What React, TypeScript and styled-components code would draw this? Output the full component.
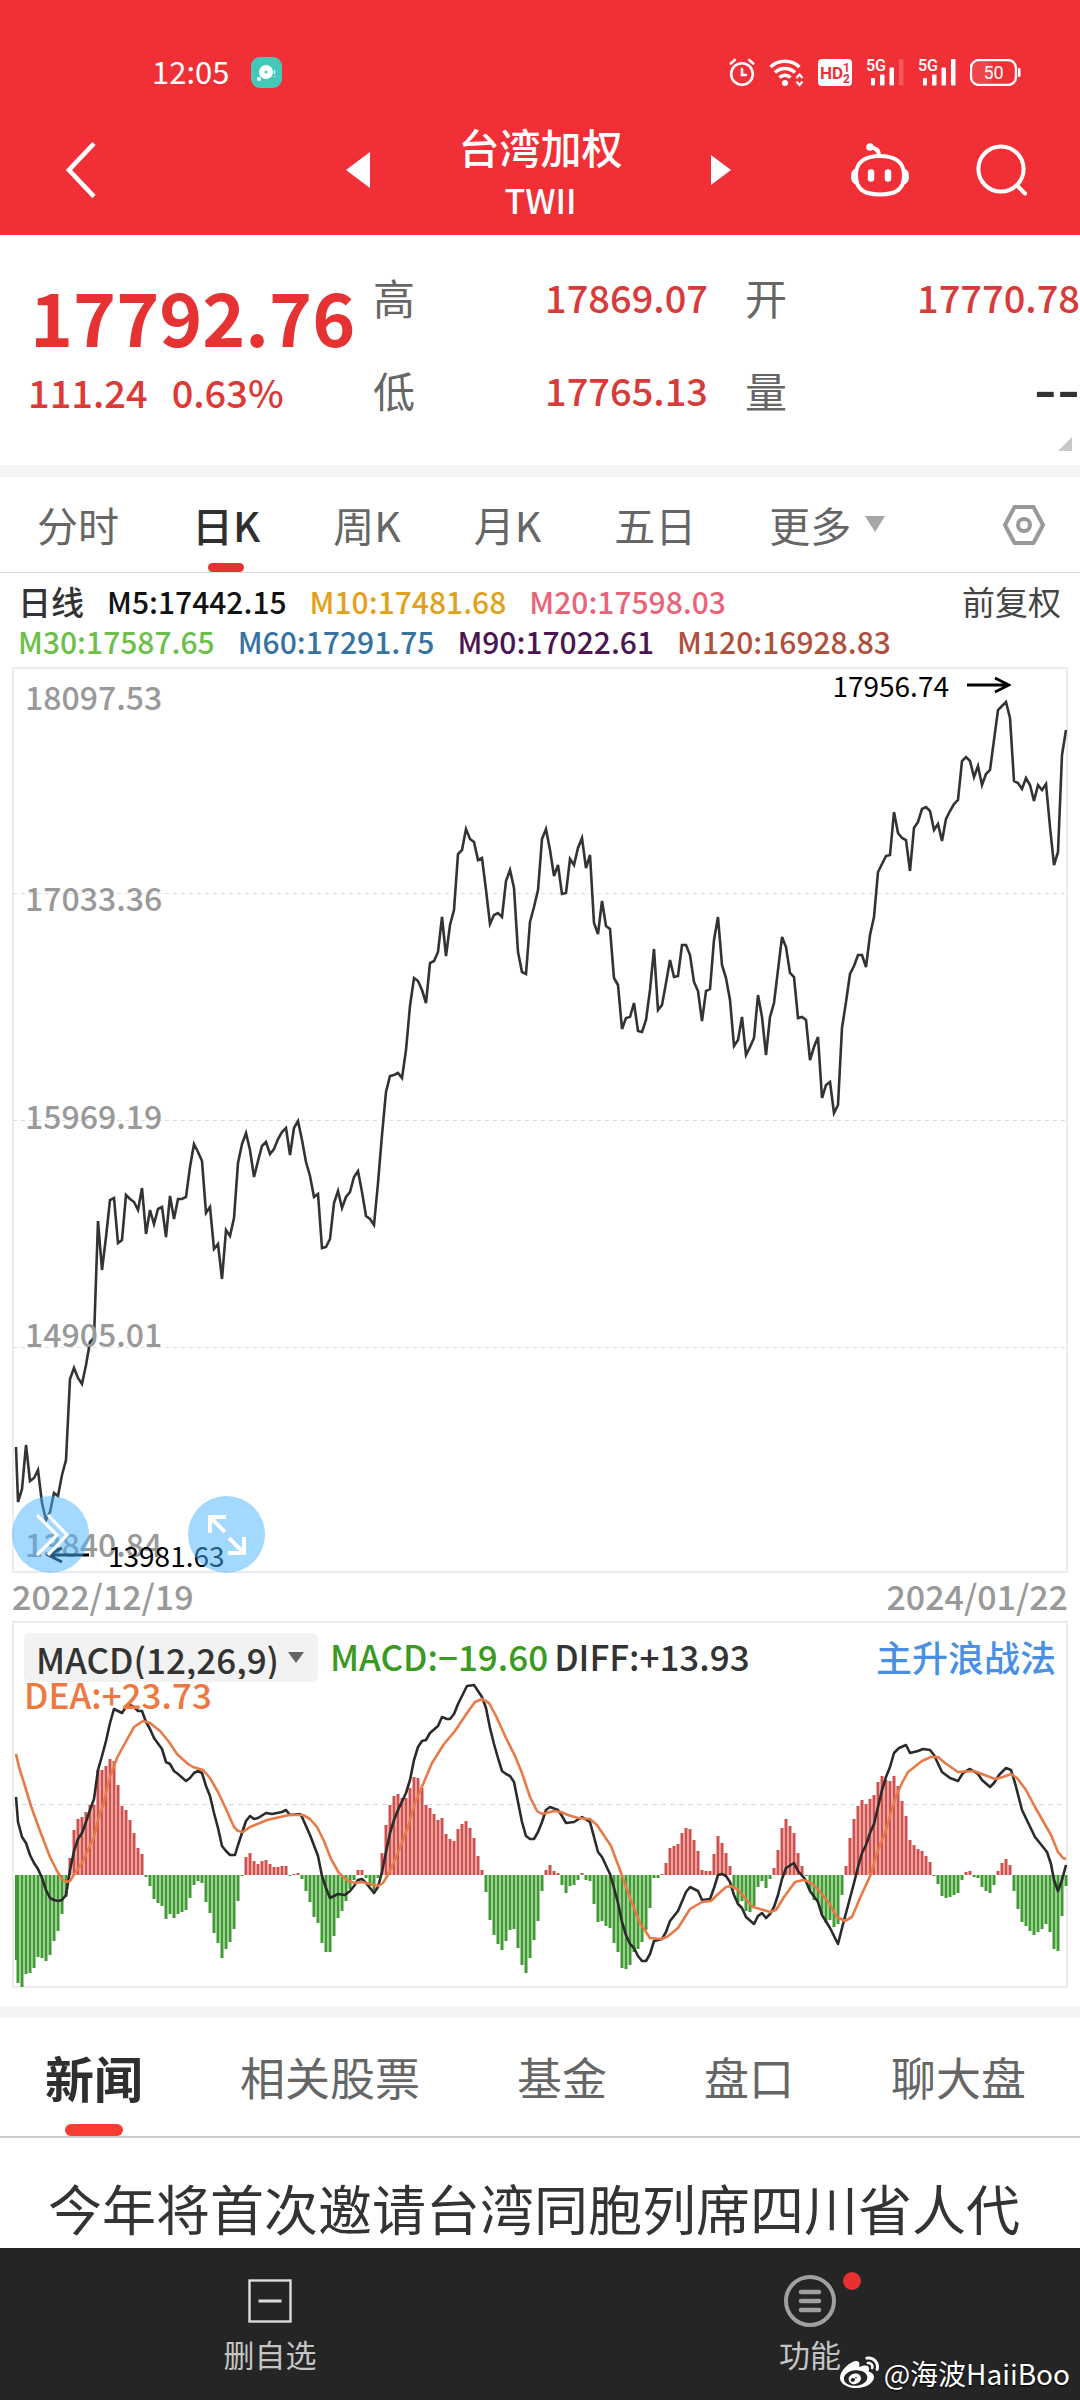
import React from "react";
import styled, { createGlobalStyle, css } from "styled-components";
import { FaWeibo } from "react-icons/fa";

/* ---------- chart data ---------- */

const STEP = 4;
const FIRST_X = 18;

// Closing line, one plotted value per trading day.
const CLOSES = [
  1502, 1489, 1445, 1481, 1478, 1470, 1503, 1520, 1512, 1493, 1496, 1475, 1460, 1379, 1368, 1378, 1384, 1365, 1342, 1338,
  1221, 1270, 1237, 1200, 1198, 1243, 1240, 1195, 1199, 1202, 1210, 1188, 1234, 1210, 1224, 1209, 1207, 1237, 1196, 1219,
  1199, 1199, 1197, 1167, 1144, 1152, 1161, 1213, 1207, 1249, 1244, 1279, 1230, 1236, 1218, 1163, 1144, 1133, 1150, 1177,
  1161, 1146, 1142, 1154, 1149, 1139, 1132, 1128, 1155, 1128, 1121, 1140, 1162, 1176, 1197, 1194, 1248, 1247, 1239, 1203,
  1191, 1208, 1197, 1192, 1177, 1171, 1192, 1216, 1219, 1225, 1183, 1135, 1092, 1076, 1075, 1073, 1078, 1050, 1006, 978,
  981, 990, 1003, 963, 961, 952, 917, 956, 925, 910, 854, 850, 829, 839, 842, 860, 858, 890, 924, 915,
  913, 917, 881, 870, 888, 952, 972, 974, 922, 907, 890, 839, 829, 850, 876, 865, 894, 893, 859, 865,
  848, 838, 868, 855, 923, 934, 901, 926, 929, 978, 985, 1029, 1018, 1017, 1003, 1031, 1032, 1020, 990, 949,
  1010, 1005, 983, 960, 977, 976, 945, 945, 955, 982, 991, 1021, 991, 989, 940, 917, 965, 978, 1000, 1046,
  1040, 1017, 1055, 1047, 1038, 995, 1017, 1055, 1017, 1003, 970, 937, 947, 973, 977, 1018, 1017, 1020, 1060, 1047,
  1037, 1098, 1085, 1082, 1113, 1105, 1028, 1002, 974, 966, 955, 955, 967, 935, 917, 872, 864, 856, 855, 812,
  833, 838, 840, 871, 828, 822, 809, 807, 811, 830, 824, 841, 819, 811, 804, 800, 761, 757, 761, 777,
  766, 785, 774, 770, 740, 710, 706, 702, 718, 781, 783, 789, 778, 785, 801, 785, 790, 784, 827, 865,
  852, 755, 730,
];

// MACD histogram: positive values rise above the zero axis, negative ones hang below it.
const HISTOGRAM = [
  -108, -112, -99, -98, -93, -82, -83, -86, -80, -66, -56, -39, -22, 17, 45, 56, 58, 63, 70, 70,
  105, 105, 109, 116, 114, 90, 69, 65, 55, 42, 27, 21, -2, -11, -24, -28, -31, -44, -39, -43,
  -39, -37, -35, -23, -10, -6, -8, -27, -38, -58, -68, -83, -74, -67, -54, -26, -1, 18, 22, 14,
  11, 14, 15, 11, 8, 8, 9, 9, -1, 1, 2, -4, -16, -27, -42, -48, -68, -77, -77, -61,
  -43, -36, -26, -14, -5, 5, 5, -3, -11, -15, -3, 22, 50, 70, 79, 81, 77, 77, 87, 98,
  97, 87, 70, 67, 61, 55, 57, 41, 36, 34, 46, 51, 54, 47, 37, 19, 5, -17, -45, -60,
  -69, -75, -66, -55, -54, -73, -90, -98, -83, -65, -46, -16, 5, 10, 4, 2, -10, -18, -11, -10,
  -5, 2, -5, -6, -29, -47, -46, -51, -53, -68, -77, -93, -94, -90, -77, -74, -67, -55, -33, -3,
  -3, 1, 12, 27, 29, 31, 42, 47, 46, 35, 24, 5, 4, 4, 21, 39, 32, 22, 9, -13,
  -27, -26, -36, -37, -31, -12, -6, -13, -4, 7, 25, 47, 56, 49, 42, 22, 9, -1, -15, -25,
  -27, -39, -48, -45, -52, -49, -20, 9, 37, 56, 69, 75, 71, 76, 80, 93, 99, 95, 94, 99,
  89, 74, 59, 35, 30, 26, 24, 19, 13, -1, -9, -21, -23, -22, -20, -18, -5, 3, 4, -2,
  -3, -12, -16, -18, -10, 4, 12, 16, 10, -16, -34, -47, -51, -56, -60, -57, -54, -49, -57, -74,
  -76, -41, -11,
];

const DIFF =
  "16,1797 18,1822 22,1837 26,1843 30,1855 34,1863 38,1869 42,1878 46,1890 50,1898 54,1900 58,1901 62,1900 66,1895 70,1870 74,1851 78,1839 82,1833 86,1822 90,1810 94,1799 98,1770 102,1756 106,1741 110,1723 114,1709 118,1711 122,1713 126,1707 130,1705 134,1707 138,1711 142,1711 146,1722 150,1729 154,1738 162,1749 166,1762 170,1764 174,1771 178,1774 186,1781 190,1778 194,1773 198,1771 202,1773 206,1786 210,1796 214,1813 218,1828 222,1846 226,1851 230,1855 235,1855 238,1845 242,1833 246,1821 250,1816 254,1819 258,1818 266,1813 272,1814 282,1812 286,1810 290,1815 300,1814 302,1817 310,1835 318,1856 322,1876 326,1888 330,1898 338,1894 345,1895 350,1891 354,1886 358,1880 362,1879 366,1883 370,1888 374,1893 378,1887 382,1872 386,1852 390,1833 394,1820 398,1810 406,1793 410,1780 414,1760 418,1747 422,1741 426,1740 430,1733 438,1726 442,1717 447,1719 450,1719 454,1714 458,1704 467,1686 474,1685 482,1697 486,1708 490,1728 494,1744 498,1758 502,1771 506,1774 510,1776 514,1782 518,1802 522,1822 526,1836 530,1839 534,1839 538,1832 542,1822 546,1810 550,1807 558,1810 562,1816 566,1823 574,1822 582,1817 590,1822 594,1837 598,1852 602,1857 610,1874 614,1888 618,1903 622,1922 626,1935 630,1944 634,1948 638,1956 642,1961 646,1961 650,1954 654,1941 662,1939 666,1932 670,1921 678,1911 686,1892 690,1887 698,1891 702,1900 710,1899 714,1888 718,1875 722,1874 726,1876 730,1882 734,1895 738,1904 742,1908 746,1917 754,1924 758,1916 762,1913 766,1918 770,1914 774,1907 778,1895 782,1879 786,1868 794,1863 798,1871 805,1879 810,1891 818,1902 822,1915 830,1928 838,1944 842,1928 846,1913 854,1883 858,1867 862,1853 866,1845 870,1833 874,1824 878,1807 882,1790 886,1777 890,1767 894,1753 899,1748 906,1745 910,1753 918,1751 923,1749 930,1750 934,1755 942,1772 950,1778 958,1781 963,1773 970,1769 978,1774 982,1780 990,1787 994,1783 999,1775 1006,1768 1011,1770 1015,1783 1022,1810 1035,1837 1047,1852 1051,1864 1054,1880 1058,1891 1062,1880 1066,1865";

const DEA =
  "16,1754 19,1767 24,1783 31,1806 40,1831 50,1857 57,1871 62,1879 66,1882 70,1881 75,1873 82,1863 88,1850 94,1837 98,1820 103,1805 110,1777 117,1758 124,1745 134,1727 143,1721 150,1723 160,1731 169,1742 177,1754 188,1764 193,1767 203,1770 210,1778 218,1792 226,1809 234,1827 238,1831 243,1832 250,1827 260,1823 267,1820 289,1815 303,1815 310,1819 317,1827 324,1841 331,1859 339,1873 348,1881 355,1883 362,1882 370,1884 378,1886 383,1883 389,1873 394,1862 401,1845 408,1827 415,1803 424,1782 432,1763 444,1744 455,1731 467,1713 475,1702 482,1699 489,1703 496,1716 506,1738 515,1756 522,1773 530,1797 537,1811 542,1814 554,1811 561,1812 568,1815 578,1818 590,1819 597,1825 611,1846 620,1870 630,1898 640,1923 650,1938 661,1939 667,1937 678,1928 690,1909 702,1902 711,1901 717,1895 726,1887 731,1886 738,1890 753,1907 770,1912 776,1910 784,1897 795,1882 803,1880 810,1882 817,1888 829,1903 837,1917 845,1921 852,1917 860,1898 871,1874 877,1853 886,1830 895,1799 902,1783 908,1772 922,1761 931,1757 938,1757 945,1763 958,1772 974,1771 995,1779 1003,1777 1011,1774 1017,1778 1026,1790 1035,1807 1051,1835 1058,1852 1063,1858 1066,1859";

const priceLine = ["16,1447", ...CLOSES.map((y, i) => `${FIRST_X + i * STEP},${y}`)].join(" ");

/* ---------- global ---------- */

const FONT = `"Noto Sans CJK SC", "Noto Sans", sans-serif`;

const GlobalStyle = createGlobalStyle`
  *, *::before, *::after { box-sizing: border-box; }
  body { margin: 0; background: #fff; font-family: ${FONT}; }
  h1, h2, p, ul, dl, dd, dt { margin: 0; padding: 0; font-weight: 400; }
  ul { list-style: none; }
  button, select { font-family: inherit; border: 0; background: none; padding: 0; margin: 0; color: inherit; cursor: pointer; }
  a { text-decoration: none; color: inherit; }
  svg { display: block; flex: none; }
`;

const Page = styled.div`
  min-height: 100vh;
  display: flex;
  flex-direction: column;
  color: #333;
`;

const Band = styled.div`
  height: 12px;
  background: #f4f4f4;
`;

/* ---------- header ---------- */

const Header = styled.header`
  background: #f12f37;
  color: #fff;
`;

const StatusBar = styled.div`
  display: flex;
  align-items: center;
  justify-content: space-between;
  padding: 48px 59px 0 152px;
  height: 96px;
`;

const StatusGroup = styled.div<{ $gap: number }>`
  display: flex;
  align-items: center;
  gap: ${(p) => p.$gap}px;
`;

const Clock = styled.span`
  font-size: 31px;
  line-height: 40px;
  padding-bottom: 2px;
`;

const TitleBar = styled.div`
  display: grid;
  grid-template-columns: 280fr 385fr 297fr;
  align-items: center;
  height: 139px;
  padding: 8px 52px 0 66px;
`;

const Switcher = styled.div`
  display: flex;
  align-items: center;
  justify-content: space-between;
`;

const TitleBlock = styled.div`
  text-align: center;
  padding-top: 6px;
`;

const StockName = styled.h1`
  && { font-weight: 500; }
  font-size: 41px;
  line-height: 54px;
`;

const StockCode = styled.p`
  && { font-weight: 500; }
  font-size: 34px;
  line-height: 54px;
`;

const Tools = styled.div`
  display: flex;
  justify-content: flex-end;
  align-items: center;
  gap: 66px;
`;

/* ---------- quote ---------- */

const Quote = styled.section`
  position: relative;
  display: grid;
  grid-template-columns: 373fr 335fr 372fr;
  height: 230px;
`;

const Last = styled.div`
  padding: 40px 0 0 28px;
  color: #e63232;
`;

const LastPrice = styled.p`
  && { font-weight: 700; }
  padding-left: 2px;
  font-size: 73px;
  line-height: 80px;
`;

const Change = styled.p`
  && { font-weight: 500; }
  display: flex;
  gap: 24px;
  font-size: 38px;
  line-height: 74px;
  color: #dc3a37;
`;

const Facts = styled.dl<{ $indent?: boolean }>`
  padding: 34px 0 0 ${(p) => (p.$indent ? 37 : 0)}px;
`;

const Fact = styled.div`
  display: flex;
  justify-content: space-between;
  align-items: center;
  height: 56px;
  margin-bottom: 37px;
`;

const FactName = styled.dt`
  font-size: 42px;
  line-height: 56px;
  color: #666;
`;

const FactValue = styled.dd`
  && { font-weight: 500; }
  font-size: 38px;
  line-height: 56px;
  color: #d63c3a;
`;

const FactEmpty = styled.dd`
  && { font-weight: 400; }
  font-family: "DejaVu Sans", sans-serif;
  font-size: 64px;
  line-height: 56px;
  color: #333;
`;

const Corner = styled.span`
  position: absolute;
  right: 8px;
  bottom: 14px;
  border-style: solid;
  border-width: 0 0 14px 14px;
  border-color: transparent transparent #c8c8c8 transparent;
`;

/* ---------- period tabs ---------- */

const PeriodTabs = styled.nav`
  display: flex;
  align-items: stretch;
  gap: 73px;
  height: 96px;
  padding: 0 35px 0 37px;
  border-bottom: 1px solid #dedede;
`;

const TabButton = styled.button<{ $active?: boolean }>`
  position: relative;
  display: flex;
  align-items: center;
  gap: 14px;
  padding-bottom: 2px;
  font-size: 41px;
  line-height: 56px;
  font-weight: ${(p) => (p.$active ? 500 : 400)};
  color: ${(p) => (p.$active ? "#2f2f2f" : "#666")};
  white-space: nowrap;
  ${(p) =>
    p.$active &&
    css`
      &::after {
        content: "";
        position: absolute;
        left: 50%;
        bottom: 0;
        width: 36px;
        height: 9px;
        margin-left: -18px;
        border-radius: 5px;
        background: #e63232;
      }
    `}
`;

const SettingsButton = styled.button`
  margin-left: auto;
`;

/* ---------- averages ---------- */

const Averages = styled.section`
  display: flex;
  justify-content: space-between;
  padding: 8px 19px 6px 18px;
  font-size: 30px;
  line-height: 40px;
`;

const AverageRow = styled.p`
  && { font-weight: 500; }
  display: flex;
  gap: 23px;
`;

const Tint = styled.span<{ $color: string }>`
  color: ${(p) => p.$color};
`;

const Period = styled.span`
  font-size: 33px;
`;

const Adjust = styled.button`
  align-self: flex-start;
  font-size: 33px;
  line-height: 40px;
  color: #444;
`;

/* ---------- charts ---------- */

const ChartBox = styled.section`
  position: relative;
  margin: 0 12px;
`;

const ChartSvg = styled.svg`
  width: 100%;
  height: auto;
`;

const AxisLabel = styled.span<{ $top: number }>`
  position: absolute;
  left: 13px;
  top: ${(p) => p.$top}%;
  transform: translateY(-50%);
  font-size: 32px;
  line-height: 36px;
  font-weight: 500;
  color: #999;
`;

const Extreme = styled.span<{ $high?: boolean }>`
  position: absolute;
  display: flex;
  align-items: center;
  gap: 18px;
  font-size: 28px;
  line-height: 32px;
  color: #000;
  ${(p) => (p.$high ? "right: 57px; top: 2px;" : "left: 34px; bottom: 2px;")}
`;

const RoundButton = styled.button<{ $left: number }>`
  position: absolute;
  left: ${(p) => p.$left}px;
  bottom: 0;
  width: 77px;
  height: 77px;
  border-radius: 50%;
  background: rgba(72, 178, 255, 0.5);
  display: grid;
  place-items: center;
`;

const Dates = styled.div`
  display: flex;
  justify-content: space-between;
  padding: 0 12px 2px;
  font-size: 34px;
  font-weight: 500;
  line-height: 46px;
  color: #999;
`;

const MacdLegend = styled.div`
  position: absolute;
  inset: 12px 12px auto 12px;
  font-size: 35px;
  font-weight: 500;
  line-height: 46px;
`;

const MacdRow = styled.div`
  display: flex;
  align-items: flex-start;
  gap: 6px;
`;

const Picker = styled.label`
  position: relative;
  margin-right: 6px;

  svg {
    position: absolute;
    right: 14px;
    top: 19px;
    pointer-events: none;
  }
`;

const PickerSelect = styled.select`
  appearance: none;
  display: block;
  width: 294px;
  height: 49px;
  padding: 0 0 3px 12px;
  border-radius: 6px;
  background: #f2f2f2;
  font-size: 35px;
  font-weight: 500;
  color: #333;
`;

const Strategy = styled.a`
  margin-left: auto;
  font-size: 36px;
  color: #4a90e2;
`;

const Dea = styled.p`
  && { font-weight: 500; }
  line-height: 24px;
  color: #ef7740;
`;

const Spacer = styled.div`
  height: 18px;
`;

/* ---------- news ---------- */

const NewsTabs = styled.nav`
  display: flex;
  justify-content: space-between;
  height: 120px;
  padding: 0 54px 0 45px;
  border-bottom: 2px solid #cbcbcb;
`;

const NewsTab = styled.button<{ $active?: boolean }>`
  position: relative;
  font-size: ${(p) => (p.$active ? 49 : 45)}px;
  line-height: 60px;
  font-weight: ${(p) => (p.$active ? 700 : 400)};
  color: ${(p) => (p.$active ? "#2f2f2f" : "#666")};
  ${(p) =>
    p.$active &&
    css`
      &::after {
        content: "";
        position: absolute;
        left: 50%;
        bottom: 0;
        width: 58px;
        height: 12px;
        margin-left: -29px;
        border-radius: 6px;
        background: #fa3c32;
      }
    `}
`;

const NewsList = styled.ul`
  flex: 1;
  padding: 30px 48px 0;
`;

const Headline = styled.a`
  display: block;
  font-size: 54px;
  line-height: 80px;
  white-space: nowrap;
  color: #333;
`;

/* ---------- bottom bar ---------- */

const BottomBar = styled.footer`
  position: relative;
  display: grid;
  grid-template-columns: 1fr 1fr;
  height: 152px;
  background: #252525;
  color: #c4c4c4;
`;

const BottomButton = styled.button`
  display: flex;
  flex-direction: column;
  align-items: center;
  padding-top: 26px;
  gap: 6px;
  font-size: 31px;
  line-height: 40px;
`;

const IconHolder = styled.span`
  position: relative;
  display: grid;
  place-items: center;
  width: 54px;
  height: 54px;
`;

const Dot = styled.i`
  position: absolute;
  right: -24px;
  top: -2px;
  width: 18px;
  height: 18px;
  border-radius: 50%;
  background: #e83030;
`;

const Watermark = styled.p`
  position: absolute;
  right: 10px;
  bottom: 7px;
  display: flex;
  align-items: center;
  gap: 5px;
  font-size: 28px;
  line-height: 40px;
  color: #fff;
  text-shadow: 0 1px 2px #000;
`;

/* ---------- icons ---------- */

const AppBadge = () => (
  <svg width="31" height="31" viewBox="0 0 31 31">
    <rect width="31" height="31" rx="9" fill="#45c8b8" />
    <circle cx="15" cy="15" r="7" fill="#fff" />
    <circle cx="15" cy="15" r="1.5" fill="#45c8b8" />
    <circle cx="8" cy="22" r="2" fill="#fff" />
    <path d="M23.5 13v4M23.5 19v1" stroke="#c8f5ee" strokeWidth="1.5" />
  </svg>
);

const AlarmIcon = () => (
  <svg width="26" height="29" viewBox="0 0 26 29" fill="none" stroke="#fff" strokeWidth="2.6" strokeLinecap="round">
    <circle cx="13" cy="16" r="10.8" />
    <path d="M13 11v6h4M1.8 5.5l4-3.5M24.2 5.5l-4-3.5" />
  </svg>
);

const WifiIcon = () => (
  <svg width="35" height="29" viewBox="0 0 35 29" fill="none" stroke="#fff" strokeWidth="3.4">
    <path d="M1.5 9a21 21 0 0 1 29 0M6 14.500a14.500 14.500 0 0 1 20 0M10.500 19.500a8 8 0 0 1 11 0" />
    <circle cx="16" cy="25" r="3" fill="#fff" stroke="none" />
    <path d="M27.500 20l3-3.500 3 3.500M27.500 23.500l3 3.500 3-3.500" strokeWidth="2.200" />
  </svg>
);

const HdIcon = () => (
  <svg width="34" height="27" viewBox="0 0 34 27" fontFamily="Roboto, sans-serif" fontWeight="700" fill="#e8323a">
    <rect width="34" height="27" rx="4" fill="#fff" />
    <text x="2" y="20" fontSize="17">HD</text>
    <text x="25" y="13" fontSize="12">1</text>
    <text x="25" y="24" fontSize="12">2</text>
  </svg>
);

const SignalIcon = ({ weak }: { weak?: boolean }) => (
  <svg width="38" height="28" viewBox="0 0 38 28" fill="#fff">
    <text x="0" y="13" fontSize="16" fontFamily="Roboto, sans-serif" fontWeight="500">5G</text>
    <rect x="5" y="20" width="4" height="7.500" rx="1" />
    <rect x="14" y="16.500" width="4.500" height="11" rx="1" />
    <rect x="23.500" y="9.500" width="4.500" height="18" rx="1" />
    <rect x="33" y="1" width="4.500" height="26.500" rx="1" opacity={weak ? 0.2 : 1} />
  </svg>
);

const BatteryIcon = () => (
  <svg width="51" height="27" viewBox="0 0 51 27">
    <rect x="1" y="1" width="45" height="25" rx="8" fill="none" stroke="#fff" strokeWidth="2.400" />
    <rect x="3" y="3" width="20" height="21" rx="6" fill="#fff" opacity="0.100" />
    <rect x="48" y="9" width="2.500" height="9" rx="1" fill="#fff" />
    <text x="23.500" y="19.500" fontSize="18" fontFamily="Roboto, sans-serif" fill="#fff" textAnchor="middle">50</text>
  </svg>
);

const BackIcon = () => (
  <svg width="30" height="56" viewBox="0 0 30 56" fill="none" stroke="#fff" strokeWidth="4.600">
    <path d="M28 1.500L3 28l25 26.500" />
  </svg>
);

const Triangle = ({ w, h, points, fill }: { w: number; h: number; points: string; fill: string }) => (
  <svg width={w} height={h} viewBox={`0 0 ${w} ${h}`}>
    <polygon points={points} fill={fill} />
  </svg>
);

const RobotIcon = () => (
  <svg width="60" height="54" viewBox="0 0 60 54" fill="none" stroke="#fff" strokeWidth="4">
    <path d="M30 13c-13 0-24 5-24 19 0 13 6 19.500 24 19.500S54 45 54 32c0-14-11-19-24-19z" />
    <path d="M29 13c0-5-2-8-8-8.500" />
    <circle cx="20" cy="4" r="3.800" fill="#fff" stroke="none" />
    <path d="M5 27c-4 2-4 11 0 13zM55 27c4 2 4 11 0 13z" fill="#fff" strokeWidth="2" />
    <path d="M21 29.500v6M38 29.500v6" strokeWidth="6.500" strokeLinecap="round" />
  </svg>
);

const SearchIcon = () => (
  <svg width="52" height="52" viewBox="0 0 52 52" fill="none" stroke="#fff" strokeWidth="4" strokeLinecap="round">
    <circle cx="25" cy="25" r="22.600" />
    <path d="M41 41.500l8 8" />
  </svg>
);

const HexIcon = () => (
  <svg width="42" height="40" viewBox="0 0 42 40" fill="none" stroke="#999" strokeWidth="4" strokeLinejoin="round">
    <path d="M11.500 2h19L40 20l-9.500 18h-19L2 20z" />
    <circle cx="21" cy="20" r="6" />
  </svg>
);

const ArrowIcon = ({ left }: { left?: boolean }) => (
  <svg width="44" height="18" viewBox="0 0 44 18" fill="none" stroke="#000" strokeWidth="2.800">
    <path d={left ? "M43 9H2M16 2L2 9l14 7" : "M0 9h42M28 2l14 7-14 7"} />
  </svg>
);

const ExpandRightIcon = () => (
  <svg width="36" height="44" viewBox="0 0 36 44" fill="none" stroke="#fff" strokeWidth="3.200">
    <path d="M4 2l20 20L4 42M15 2l19 20L15 42" />
  </svg>
);

const FullscreenIcon = () => (
  <svg width="38" height="40" viewBox="0 0 38 40" fill="none" stroke="#fff" strokeWidth="4">
    <path d="M17 17L3 3M2 18V2h16M21 23l14 14M36 22v16H20" />
  </svg>
);

const MinusBoxIcon = () => (
  <svg width="44" height="44" viewBox="0 0 44 44" fill="none" stroke="#dcdcdc" strokeWidth="2.400">
    <rect x="1.500" y="1.500" width="41" height="41" />
    <path d="M10.500 22h23" strokeWidth="3" />
  </svg>
);

const MenuCircleIcon = () => (
  <svg width="52" height="52" viewBox="0 0 52 52" fill="none" stroke="#a0a0a0" strokeWidth="4">
    <circle cx="26" cy="26" r="24" />
    <path d="M17 17h18M17 26h18M17 35h18" strokeLinecap="round" strokeWidth="4.500" />
  </svg>
);

/* ---------- charts ---------- */

const PriceChart = () => (
  <ChartBox aria-label="日K线">
    <ChartSvg viewBox="12 667 1056 906" fill="none">
      <rect x="13" y="668" width="1054" height="904" stroke="#ececec" strokeWidth="2" />
      {[893.5, 1120.5, 1347.5].map((y) => (
        <line key={y} x1="13" x2="1067" y1={y} y2={y} stroke="#dedede" strokeDasharray="4 4" />
      ))}
      <polyline points={priceLine} stroke="#333" strokeWidth="2.600" />
    </ChartSvg>
    <AxisLabel $top={3.2}>18097.53</AxisLabel>
    <AxisLabel $top={25.4}>17033.36</AxisLabel>
    <AxisLabel $top={49.4}>15969.19</AxisLabel>
    <AxisLabel $top={73.5}>14905.01</AxisLabel>
    <AxisLabel $top={96.7}>13840.84</AxisLabel>
    <Extreme $high>
      17956.74
      <ArrowIcon />
    </Extreme>
    <Extreme>
      <ArrowIcon left />
      13981.63
    </Extreme>
    <RoundButton $left={0} aria-label="展开">
      <ExpandRightIcon />
    </RoundButton>
    <RoundButton $left={176} aria-label="全屏">
      <FullscreenIcon />
    </RoundButton>
  </ChartBox>
);

const ZERO = 1875;

const MacdChart = () => (
  <ChartBox aria-label="MACD">
    <ChartSvg viewBox="12 1621 1056 367" fill="none">
      <rect x="13" y="1622" width="1054" height="365" stroke="#ececec" strokeWidth="2" />
      <line x1="13" x2="1067" y1="1804.5" y2="1804.5" stroke="#d8d8d8" strokeDasharray="5 4" />
      <rect x="15" y={ZERO} width="2" height="85" fill="#3f9c30" />
      {HISTOGRAM.map((v, i) => (
        <rect
          key={i}
          x={FIRST_X - 1.5 + i * STEP}
          y={v > 0 ? ZERO - v : ZERO}
          width="3"
          height={Math.abs(v)}
          fill={v > 0 ? "#d24f4c" : "#3f9c30"}
        />
      ))}
      <polyline points={DIFF} stroke="#2b2b2b" strokeWidth="2.600" strokeLinejoin="round" />
      <polyline points={DEA} stroke="#e87a48" strokeWidth="2.600" strokeLinejoin="round" />
    </ChartSvg>
    <MacdLegend>
      <MacdRow>
        <Picker>
          <PickerSelect aria-label="指标">
            <option>MACD(12,26,9)</option>
          </PickerSelect>
          <Triangle w={16} h={11} points="0,0 16,0 8,11" fill="#666" />
        </Picker>
        <Tint $color="#3a9a22">MACD:−19.60</Tint>
        <Tint $color="#333">DIFF:+13.93</Tint>
        <Strategy href="#strategy">主升浪战法</Strategy>
      </MacdRow>
      <Dea>DEA:+23.73</Dea>
    </MacdLegend>
  </ChartBox>
);

/* ---------- page ---------- */

export default function App() {
  return (
    <Page>
      <GlobalStyle />
      <Header>
        <StatusBar>
          <StatusGroup $gap={22}>
            <Clock>12:05</Clock>
            <AppBadge />
          </StatusGroup>
          <StatusGroup $gap={14}>
            <AlarmIcon />
            <WifiIcon />
            <HdIcon />
            <SignalIcon weak />
            <SignalIcon />
            <BatteryIcon />
          </StatusGroup>
        </StatusBar>
        <TitleBar>
          <button aria-label="返回">
            <BackIcon />
          </button>
          <Switcher>
            <button aria-label="上一只">
              <Triangle w={24} h={36} points="24,0 24,36 0,18" fill="#fff" />
            </button>
            <TitleBlock>
              <StockName>台湾加权</StockName>
              <StockCode>TWII</StockCode>
            </TitleBlock>
            <button aria-label="下一只">
              <Triangle w={20} h={30} points="0,0 20,15 0,30" fill="#fff" />
            </button>
          </Switcher>
          <Tools>
            <button aria-label="智能助手">
              <RobotIcon />
            </button>
            <button aria-label="搜索">
              <SearchIcon />
            </button>
          </Tools>
        </TitleBar>
      </Header>

      <Quote>
        <Last>
          <LastPrice>17792.76</LastPrice>
          <Change>
            <span>111.24</span>
            <span>0.63%</span>
          </Change>
        </Last>
        <Facts>
          <Fact>
            <FactName>高</FactName>
            <FactValue>17869.07</FactValue>
          </Fact>
          <Fact>
            <FactName>低</FactName>
            <FactValue>17765.13</FactValue>
          </Fact>
        </Facts>
        <Facts $indent>
          <Fact>
            <FactName>开</FactName>
            <FactValue>17770.78</FactValue>
          </Fact>
          <Fact>
            <FactName>量</FactName>
            <FactEmpty>--</FactEmpty>
          </Fact>
        </Facts>
        <Corner />
      </Quote>
      <Band />

      <PeriodTabs>
        <TabButton>分时</TabButton>
        <TabButton $active>日K</TabButton>
        <TabButton>周K</TabButton>
        <TabButton>月K</TabButton>
        <TabButton>五日</TabButton>
        <TabButton>
          更多
          <Triangle w={20} h={16} points="0,0 20,0 10,16" fill="#a6a6a6" />
        </TabButton>
        <SettingsButton aria-label="设置">
          <HexIcon />
        </SettingsButton>
      </PeriodTabs>

      <Averages>
        <div>
          <AverageRow>
            <Period>日线</Period>
            <Tint $color="#111">M5:17442.15</Tint>
            <Tint $color="#e2a11c">M10:17481.68</Tint>
            <Tint $color="#ea6478">M20:17598.03</Tint>
          </AverageRow>
          <AverageRow>
            <Tint $color="#6cc04a">M30:17587.65</Tint>
            <Tint $color="#3573a3">M60:17291.75</Tint>
            <Tint $color="#4b1550">M90:17022.61</Tint>
            <Tint $color="#b0503c">M120:16928.83</Tint>
          </AverageRow>
        </div>
        <Adjust>前复权</Adjust>
      </Averages>

      <PriceChart />
      <Dates>
        <span>2022/12/19</span>
        <span>2024/01/22</span>
      </Dates>
      <MacdChart />
      <Spacer />
      <Band />

      <NewsTabs>
        <NewsTab $active>新闻</NewsTab>
        <NewsTab>相关股票</NewsTab>
        <NewsTab>基金</NewsTab>
        <NewsTab>盘口</NewsTab>
        <NewsTab>聊大盘</NewsTab>
      </NewsTabs>
      <NewsList>
        <li>
          <Headline href="#news">今年将首次邀请台湾同胞列席四川省人代</Headline>
        </li>
      </NewsList>

      <BottomBar>
        <BottomButton>
          <IconHolder>
            <MinusBoxIcon />
          </IconHolder>
          删自选
        </BottomButton>
        <BottomButton>
          <IconHolder>
            <MenuCircleIcon />
            <Dot />
          </IconHolder>
          功能
        </BottomButton>
        <Watermark>
          <FaWeibo size={39} />
          @海波HaiiBoo
        </Watermark>
      </BottomBar>
    </Page>
  );
}
